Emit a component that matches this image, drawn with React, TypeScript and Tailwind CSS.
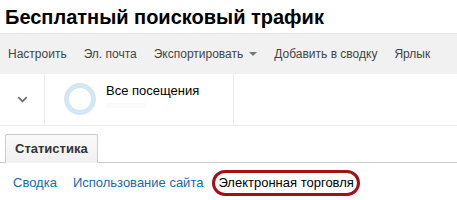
import { ChevronDown } from 'lucide-react';

const font = { fontFamily: '"Liberation Sans", Arial, sans-serif' };

const toolbarItems = ['Настроить', 'Эл. почта', 'Экспортировать', 'Добавить в сводку', 'Ярлык'];

export default function App() {
  return (
    <div className="w-[457px] h-[200px] bg-white overflow-hidden font-['Liberation_Sans',Arial,sans-serif]" style={font}>
      <div className="h-[34px] px-[5px] pt-[4px] border-b border-[#e5e5e5]">
        <h1 className="text-[20px] leading-[26px] font-bold text-black">Бесплатный поисковый трафик</h1>
      </div>

      <div className="h-[40px] bg-[#f1f1f1] flex items-center pl-[8px] gap-[17px] text-[12px] text-[#444]">
        {toolbarItems.map((item) => (
          <span key={item} className="flex items-center">
            {item}
            {item === 'Экспортировать' && (
              <span className="ml-[6px] w-0 h-0 border-l-[4px] border-r-[4px] border-t-[4px] border-l-transparent border-r-transparent border-t-[#777]" />
            )}
          </span>
        ))}
      </div>

      <div className="h-[52px] flex border-b border-[#ebebeb]">
        <div className="w-[45px] flex items-center justify-center border-r border-[#ebebeb]">
          <ChevronDown size={15} strokeWidth={2.5} className="text-[#666]" />
        </div>
        <div className="w-[189px] flex pl-[19px] pt-[9px] gap-[10px] border-r border-[#ebebeb]">
          <div className="w-[32px] h-[32px] rounded-full border-[5px] border-[#d3e6f3] shrink-0" />
          <div className="flex flex-col">
            <span className="text-[13px] leading-[16px] text-black">Все посещения</span>
            <span className="mt-[4px] w-[40px] h-[5px] bg-[#fafafa]" />
          </div>
        </div>
      </div>

      <div className="h-[37px] flex items-end pl-[5px] border-b border-[#ccc]">
        <div className="h-[29px] px-[9px] flex items-center bg-[linear-gradient(#fafafa,#f0f0f0)] border border-b-0 border-[#ccc] rounded-t-[2px] -mb-px text-[13px] font-bold text-[#333]">
          Статистика
        </div>
      </div>

      <div className="flex items-center h-[36px] pt-[4px] pl-[13px] gap-[16px] text-[13px] text-[#2068a8]">
        <span>Сводка</span>
        <span>Использование сайта</span>
        <span className="text-black border-[3px] border-[#a31117] rounded-full px-[3px] h-[26px] flex items-center -ml-[7px]">Электронная торговля</span>
      </div>
    </div>
  );
}
